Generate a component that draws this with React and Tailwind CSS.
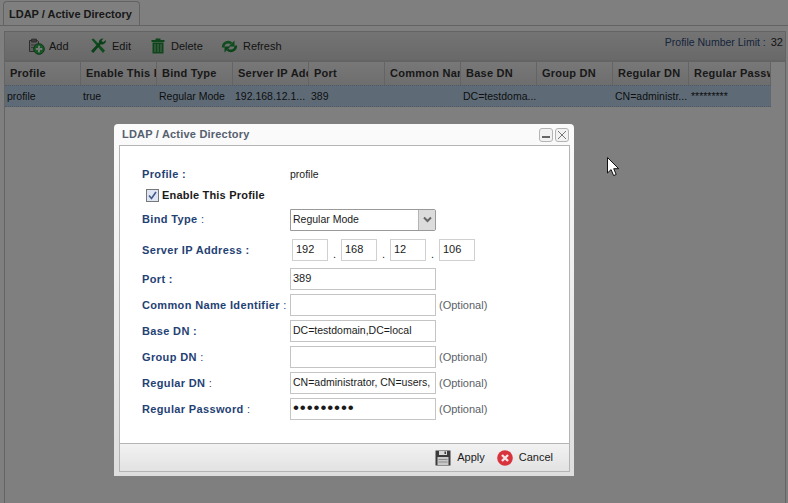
import React from "react";

const columns = [
  { title: "Profile", value: "profile" },
  { title: "Enable This Profile", value: "true" },
  { title: "Bind Type", value: "Regular Mode" },
  { title: "Server IP Address", value: "192.168.12.1..." },
  { title: "Port", value: "389" },
  { title: "Common Name Identifier", value: "" },
  { title: "Base DN", value: "DC=testdoma..." },
  { title: "Group DN", value: "" },
  { title: "Regular DN", value: "CN=administr..." },
  { title: "Regular Password", value: "*********", last: true },
];

// Icons
function AddIcon() {
  return (
    <svg width="17" height="17" viewBox="0 0 17 17">
      <path d="M1.5 2.5h8l1 1v10h-9z" fill="#bdbdbd" stroke="#5a5a5a" />
      <path d="M3.5 1h5v3h-5z" fill="#777" stroke="#4a4a4a" strokeWidth="0.6" />
      <path d="M3 7h5M3 9.5h4" stroke="#777" />
      <circle cx="11" cy="11" r="5.3" fill="#2fae4d" stroke="#17702d" />
      <path d="M11 7.8v6.4M7.8 11h6.4" stroke="#e8f5ea" strokeWidth="2" />
    </svg>
  );
}

function EditIcon() {
  return (
    <svg width="17" height="16" viewBox="0 0 17 16">
      <path d="M1.5 1.5l2-1 11.5 12-2 2.5z" fill="#1d9a3a" />
      <path d="M16 2a4 4 0 0 1-5.2 4.2L3.3 15 1 13l7.8-8.2A4 4 0 0 1 13.5 0.6l-2 2.1 1.6 1.6z" fill="#168232" />
    </svg>
  );
}

function TrashIcon() {
  return (
    <svg width="14" height="16" viewBox="0 0 14 16">
      <path d="M0.5 2h13v2h-13zM4.5 0.5h5V2h-5z" fill="#1d8a35" />
      <path d="M1.5 4.5h11V15.5h-11z" fill="#1d8a35" />
      <path d="M4 6v8M7 6v8M10 6v8" stroke="#9ed0a8" strokeWidth="1" />
    </svg>
  );
}

function RefreshIcon() {
  return (
    <svg width="17" height="13" viewBox="0 0 17 13">
      <path d="M2.2 7.5A5 5 0 0 1 10.5 3.4" fill="none" stroke="#1f9a3c" strokeWidth="2.6" />
      <path d="M13.5 0.5v6h-6z" fill="#1f9a3c" />
      <path d="M14.8 5.5A5 5 0 0 1 6.5 9.6" fill="none" stroke="#178a33" strokeWidth="2.6" />
      <path d="M3.5 12.5v-6h6z" fill="#178a33" />
    </svg>
  );
}

function FloppyIcon() {
  return (
    <svg width="16" height="16" viewBox="0 0 16 16">
      <path d="M0.5 0.5h15v15H0.5z" fill="#3b3b3b" />
      <path d="M4 1h8v4H4z" fill="#d8d8d8" />
      <path d="M9.5 1.5h1.5v2.5H9.5z" fill="#3b3b3b" />
      <path d="M2.5 7h11v8h-11z" fill="#c8c8c8" />
      <path d="M3.5 9.5h9M3.5 12h9" stroke="#8d8d8d" />
    </svg>
  );
}

function CancelIcon() {
  return (
    <svg width="16" height="16" viewBox="0 0 16 16">
      <circle cx="8" cy="8" r="7.8" fill="#d8333c" />
      <path d="M5 5l6 6M11 5l-6 6" stroke="#f4e4e4" strokeWidth="2.4" />
    </svg>
  );
}

function Cursor() {
  return (
    <svg width="13" height="20" viewBox="0 0 13 20" className="absolute left-[607px] top-[157px]">
      <path d="M0.5 0.5v15.5l3.6-3.4 2.5 6 2.6-1.1-2.5-5.8h5z" fill="#fff" stroke="#111" strokeWidth="1" />
    </svg>
  );
}

function ToolButton({ icon, label, className }) {
  return (
    <div className={`flex items-center ${className}`}>
      {icon}
      <span className="text-[11px] text-[#2a2a2a]">{label}</span>
    </div>
  );
}

function Label({ children, colon }) {
  return (
    <div className="w-[148px] shrink-0 text-[11px] font-bold tracking-[0.35px] text-[#1f4274]">
      {children}
      <span className="font-normal"> {colon}</span>
    </div>
  );
}

function Field({ label, colon = ":", value = "", optional, type = "text", inputClass = "text-[10.5px]" }) {
  return (
    <div className="flex h-[26px] items-center">
      <Label colon={colon}>{label}</Label>
      <input
        readOnly
        type={type}
        value={value}
        className={`box-border h-[22px] w-[146px] border border-[#c4c4c4] bg-white px-[2px] pb-[2px] text-[#1a1a1a] outline-none ${inputClass}`}
      />
      {optional && <span className="ml-[3px] text-[11px] text-[#5c6168]">(Optional)</span>}
    </div>
  );
}

function Octet({ value }) {
  return (
    <input
      readOnly
      value={value}
      className="box-border h-[22px] w-[36px] border border-[#d0d0d0] bg-white px-[3px] pb-[2px] text-[11px] text-[#1a1a1a] outline-none"
    />
  );
}

function Dot() {
  return <span className="flex h-[22px] w-[13px] items-end justify-center text-[11px] leading-[14px] text-[#222]">.</span>;
}

function Dialog() {
  return (
    <div className="absolute left-[114px] top-[124px] flex h-[352px] w-[460px] flex-col rounded-t-[4px] bg-gradient-to-b from-[#fbfbfb] to-[#dedede] pb-[4px] pl-[5px] pr-[4px]">
      <div className="flex h-[21px] shrink-0 items-center justify-between">
        <span className="pl-[3px] text-[11px] font-bold tracking-[0.2px] text-[#55606e]">LDAP / Active Directory</span>
        <div className="mb-[-1px] mr-[1px] flex gap-[2px]">
          <div className="flex h-[14px] w-[14px] items-end justify-center rounded-[3px] border border-[#b4b4b4] bg-[#f2f2f2] pb-[3px]">
            <div className="h-[2px] w-[8px] bg-[#666]" />
          </div>
          <div className="flex h-[14px] w-[14px] items-center justify-center rounded-[3px] border border-[#b4b4b4] bg-[#f2f2f2]">
            <svg width="10" height="10" viewBox="0 0 10 10">
              <path d="M1 1l8 8M9 1l-8 8" stroke="#777" strokeWidth="1" />
            </svg>
          </div>
        </div>
      </div>
      <div className="flex min-h-0 flex-1 flex-col border border-[#b4b4b4] bg-white">
        <div className="flex-1 pl-[22px] pt-[18px]">
          <div className="flex h-[20px] items-center">
            <div className="w-[148px] text-[11px] font-bold tracking-[0.35px] text-[#1f4274]">Profile :</div>
            <span className="pt-[1px] text-[10.5px] text-[#1a1a1a]">profile</span>
          </div>
          <div className="flex h-[22px] items-center pl-[4px]">
            <span className="mr-[3px] flex h-[13px] w-[13px] items-center justify-center border border-[#777] bg-[#dfe6f3]">
              <svg width="9" height="9" viewBox="0 0 9 9">
                <path d="M1 4.5l2.5 3L8 1" fill="none" stroke="#44588a" strokeWidth="1.6" />
              </svg>
            </span>
            <span className="text-[11px] font-bold tracking-[0.2px] text-[#1a1a1a]">Enable This Profile</span>
          </div>
          <div className="flex h-[26px] items-center pt-[1px]">
            <Label colon=":">Bind Type</Label>
            <div className="box-border flex h-[22px] w-[146px] items-center justify-between rounded-r-[2px] border border-[#9a9a9a] bg-white pl-[2px]">
              <span className="text-[10.5px] text-[#1a1a1a]">Regular Mode</span>
              <span className="flex h-full w-[17px] items-center justify-center border-l border-[#b4b4b4] bg-[#dcdcdc]">
                <svg width="9" height="7" viewBox="0 0 9 7">
                  <path d="M1 1.5l3.5 3.5L8 1.5" fill="none" stroke="#666" strokeWidth="2" />
                </svg>
              </span>
            </div>
          </div>
          <div className="mt-[2px] flex h-[32px] items-center">
            <div className="w-[150px] shrink-0 text-[11px] font-bold tracking-[0.35px] text-[#1f4274]">Server IP Address :</div>
            <Octet value="192" />
            <Dot />
            <Octet value="168" />
            <Dot />
            <Octet value="12" />
            <Dot />
            <Octet value="106" />
          </div>
          <Field label="Port :" colon="" value="389" inputClass="text-[11px]" />
          <Field label="Common Name Identifier" optional />
          <Field label="Base DN :" colon="" value="DC=testdomain,DC=local" />
          <Field label="Group DN" optional />
          <Field label="Regular DN" value="CN=administrator, CN=users," optional />
          <Field
            label="Regular Password"
            type="password"
            value="123456789"
            optional
            inputClass="text-[17px] tracking-[0.9px]"
          />
        </div>
        <div className="flex h-[28px] shrink-0 items-center justify-end border-t border-[#b4b4b4] bg-gradient-to-b from-[#f2f2f2] to-[#e2e2e2] pr-[16px]">
          <FloppyIcon />
          <span className="ml-[6px] text-[11px] text-[#1a1a1a]">Apply</span>
          <span className="ml-[12px]">
            <CancelIcon />
          </span>
          <span className="ml-[6px] text-[11px] text-[#1a1a1a]">Cancel</span>
        </div>
      </div>
    </div>
  );
}

export default function App() {
  return (
    <div className="relative h-[503px] w-[788px] overflow-hidden bg-white font-['Liberation_Sans',Arial,sans-serif]">
      {/* Page behind the modal */}
      <div className="flex h-[26px] items-end border-b border-[#c6c6c6] pl-[3px]">
        <div className="flex h-[24px] w-[137px] items-center rounded-t-[4px] border border-b-0 border-[#c6c6c6] bg-white pl-[5px] pt-[1px] text-[11px] font-bold text-[#333]">
          LDAP / Active Directory
        </div>
      </div>
      <div className="ml-[4px] mr-[2px] mt-[5px] h-[472px] border-l border-r border-t border-[#c8c8c8]">
        <div className="flex h-[30px] items-center justify-between border-b-2 border-[#c8c8c8] bg-gradient-to-b from-[#e8e8e8] to-[#d2d2d2]">
          <div className="flex items-center pl-[23px]">
            <ToolButton icon={<AddIcon />} label="Add" className="w-[62px] gap-[4px]" />
            <ToolButton icon={<EditIcon />} label="Edit" className="w-[61px] gap-[5px]" />
            <ToolButton icon={<TrashIcon />} label="Delete" className="w-[70px] gap-[6px]" />
            <ToolButton icon={<RefreshIcon />} label="Refresh" className="gap-[5px]" />
          </div>
          <div className="mb-[7px] flex items-baseline pr-[2px] text-[10.5px] text-[#2c4a7a]">
            Profile Number Limit :<span className="ml-[5px] text-[11px] text-[#2a2a2a]">32</span>
          </div>
        </div>
        <div className="flex h-[23px] w-[766px] items-center bg-gradient-to-b from-[#f0f0f0] to-[#dcdcdc]">
          {columns.map((col) => (
            <div
              key={col.title}
              className={`h-full overflow-hidden whitespace-nowrap border-r border-[#c8c8c8] pl-[5px] text-[11px] font-bold leading-[23px] tracking-[0.25px] text-[#333] ${col.last ? "w-[82px]" : "w-[76px]"}`}
            >
              {col.title}
            </div>
          ))}
        </div>
        <div className="flex h-[22px] w-[766px] items-center border-y border-dotted border-[#9db4cd] bg-[#bcd6ee] pt-[1px]">
          {columns.map((col) => (
            <div
              key={col.title}
              className={`overflow-hidden whitespace-nowrap pl-[2px] text-[10.5px] text-[#1c1c1c] ${col.last ? "w-[82px]" : "w-[76px]"}`}
            >
              {col.value}
            </div>
          ))}
        </div>
      </div>

      {/* Modal mask */}
      <div className="absolute inset-0 bg-black/50" />
      <Cursor />
      <Dialog />
    </div>
  );
}
